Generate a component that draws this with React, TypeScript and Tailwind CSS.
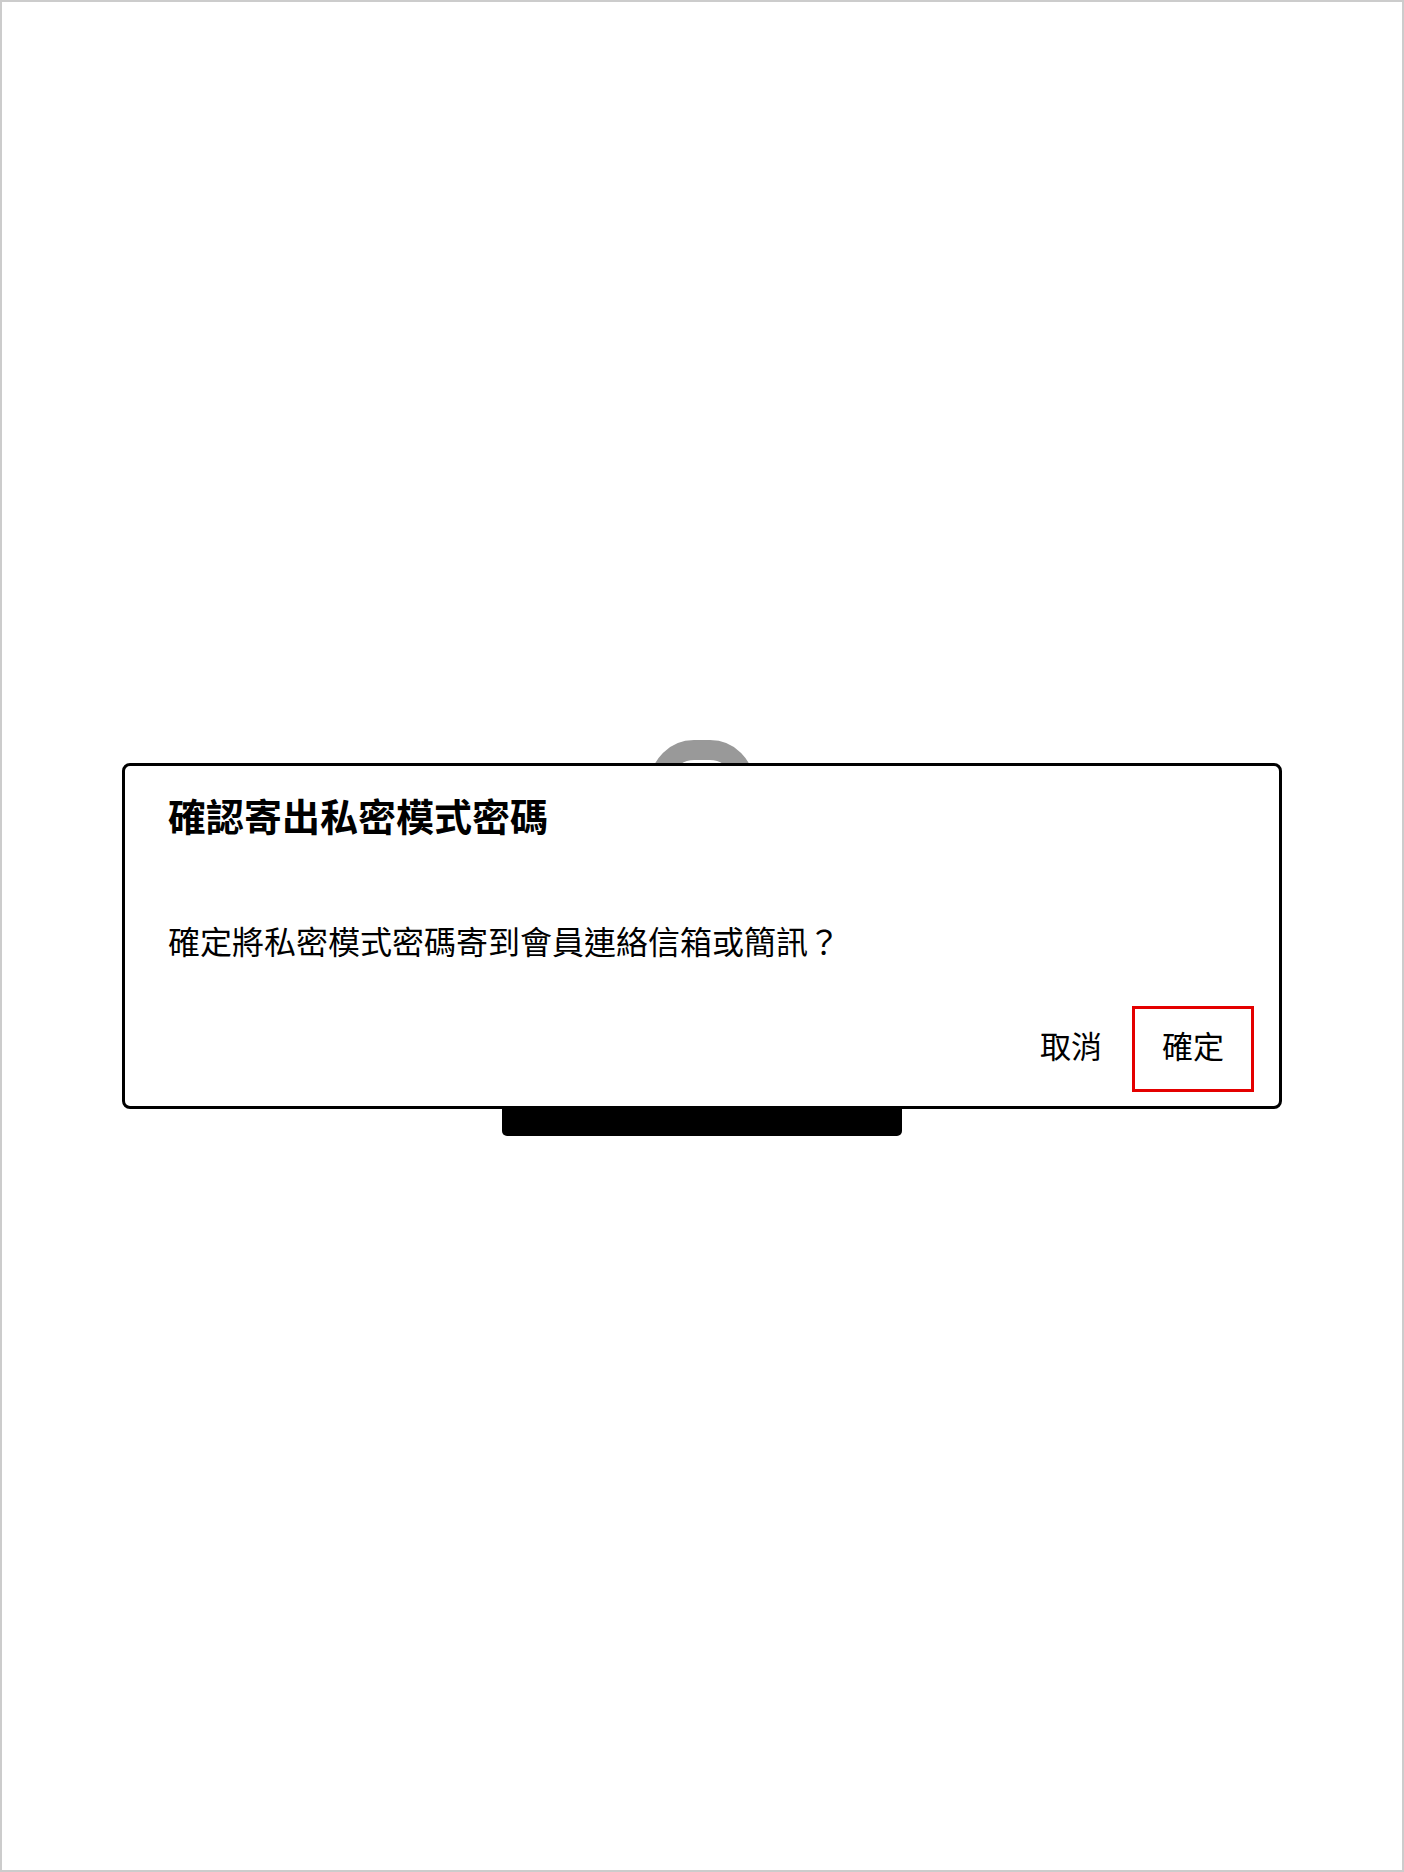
import React from "react";

export default function App() {
  return (
    <div
      className="w-[1404px] h-[1872px] box-border border-2 border-[#cccccc] bg-white flex items-center justify-center text-black"
      style={{ fontFamily: '"Noto Sans CJK TC", "Noto Sans", sans-serif' }}
    >
      <div className="relative w-[1160px] h-[346px]">
        {/* gray ring peeking behind the dialog */}
        <div className="absolute left-[528px] top-[-23px] w-[104px] h-[90px] box-border border-[20px] border-[#999999] rounded-[44px]" />
        {/* black bar under the dialog */}
        <div className="absolute left-[380px] top-[340px] w-[400px] h-[33px] bg-black rounded-b-[5px]" />
        <div className="relative w-[1160px] h-[346px] box-border border-[3px] border-black rounded-[8px] bg-white pt-[30px] pl-[43px] pr-[25px] flex flex-col">
          <div className="text-[38px] leading-[38px] font-bold">確認寄出私密模式密碼</div>
          <div className="mt-[90px] text-[32px] leading-[32px]">確定將私密模式密碼寄到會員連絡信箱或簡訊？</div>
          <div className="mt-[50px] flex justify-end">
            <button className="w-[122px] h-[86px] pb-[9px] flex items-center justify-center text-[31px] leading-[31px] bg-transparent">
              取消
            </button>
            <button className="w-[122px] h-[86px] pb-[9px] box-border border-[3px] border-[#e40000] flex items-center justify-center text-[31px] leading-[31px] bg-transparent">
              確定
            </button>
          </div>
        </div>
      </div>
    </div>
  );
}
